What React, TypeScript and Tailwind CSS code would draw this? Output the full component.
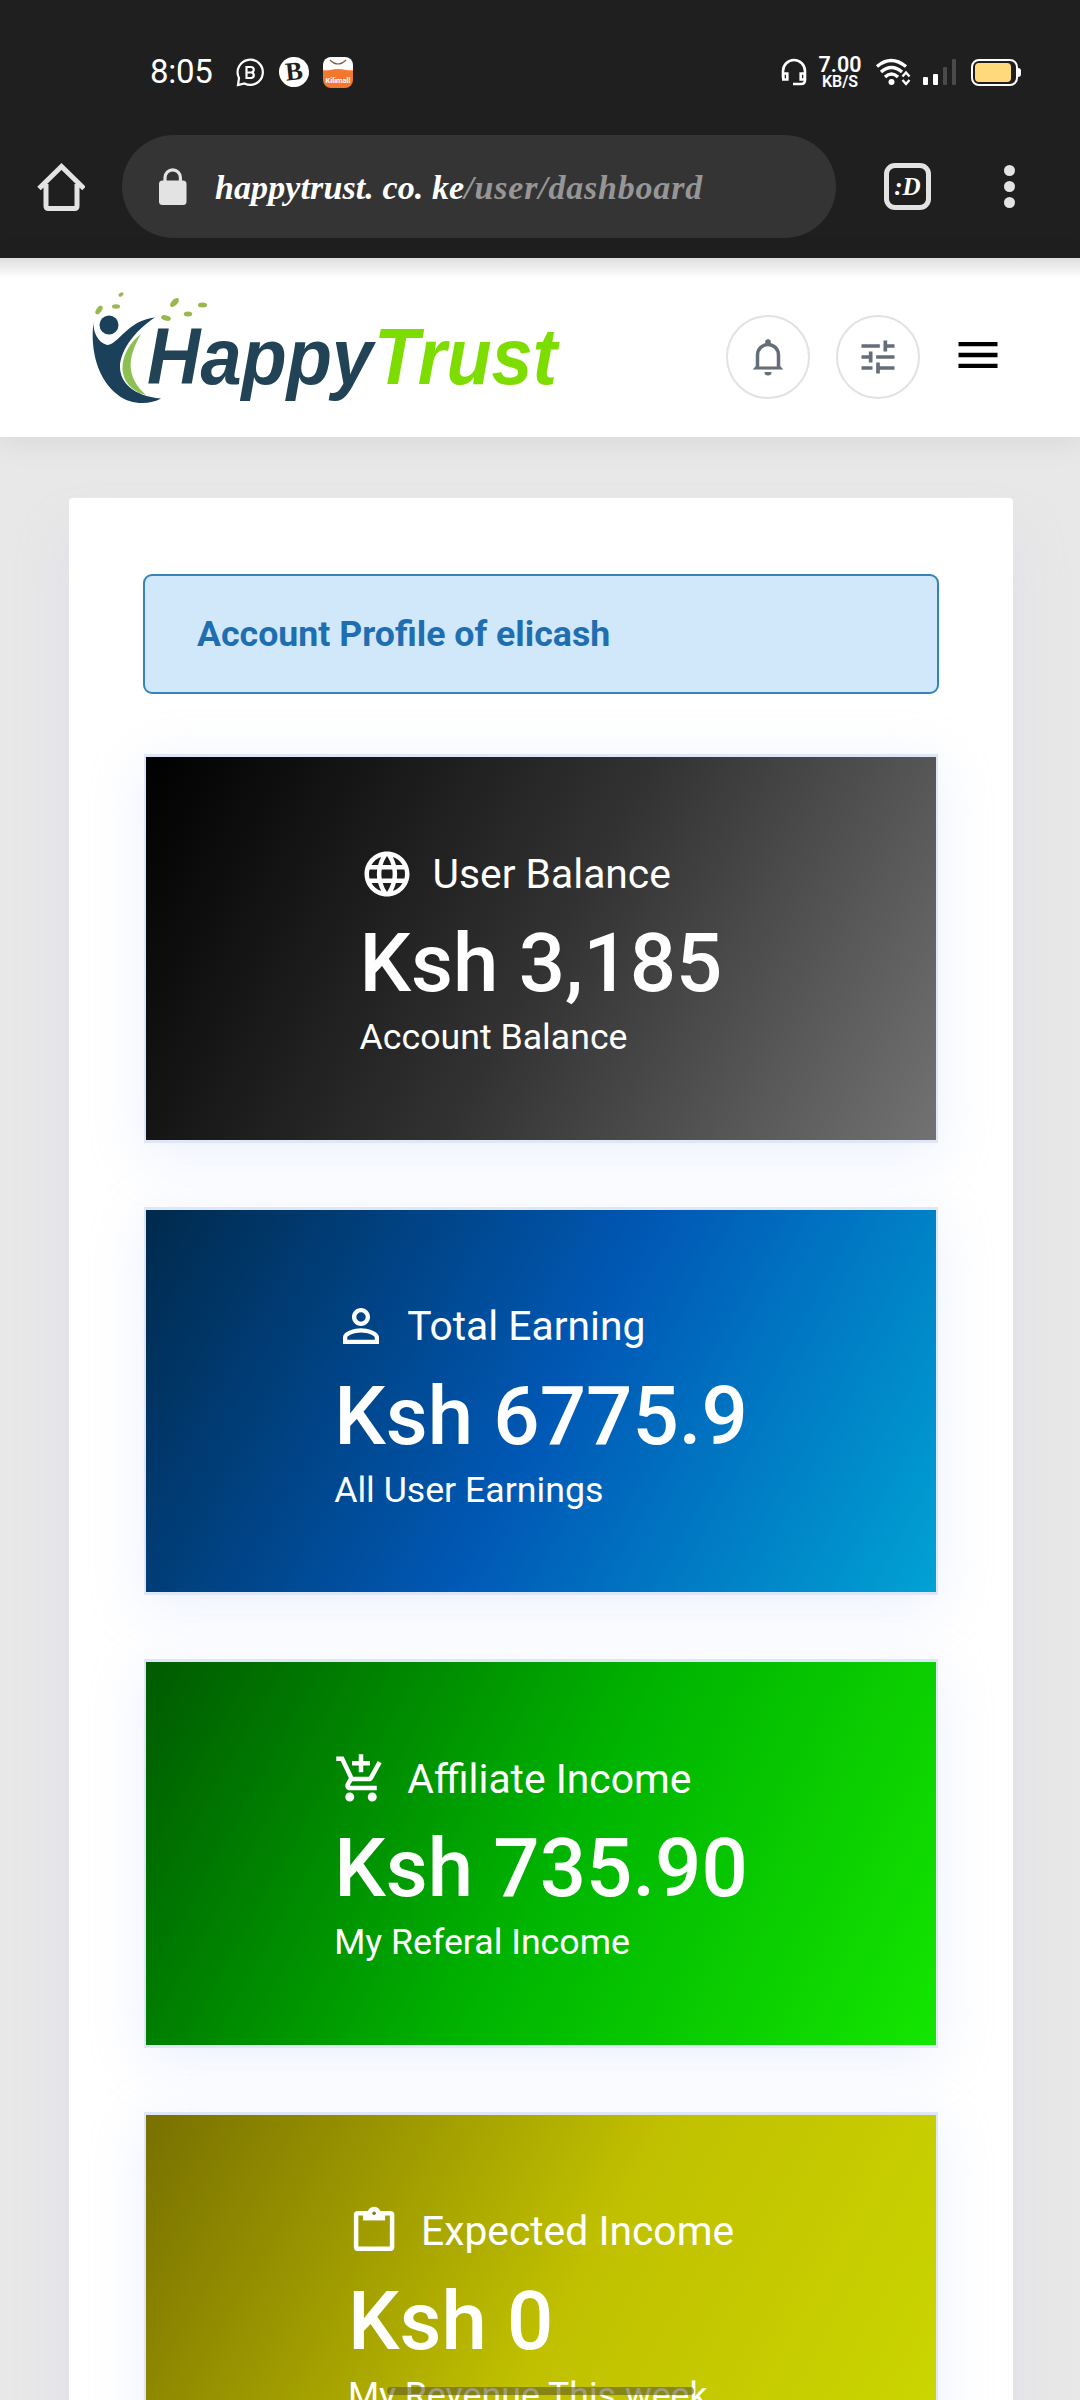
import React from 'react';
import { MdLanguage, MdPersonOutline, MdOutlineAddShoppingCart, MdTune, MdMenu } from 'react-icons/md';

const cards = [
  {
    icon: <MdLanguage size={54} />,
    title: 'User Balance',
    amount: 'Ksh 3,185',
    note: 'Account Balance',
    bg: 'bg-[linear-gradient(119deg,#000000,#323232_51%,#727272)]',
  },
  {
    icon: <MdPersonOutline size={54} />,
    title: 'Total Earning',
    amount: 'Ksh 6775.9',
    note: 'All User Earnings',
    bg: 'bg-[linear-gradient(119deg,#002a4c,#0059b6_52%,#00a2d4)]',
  },
  {
    icon: <MdOutlineAddShoppingCart size={54} />,
    title: 'Affiliate Income',
    amount: 'Ksh 735.90',
    note: 'My Referal Income',
    bg: 'bg-[linear-gradient(119deg,#005a00,#00b400_52%,#14e600)]',
  },
  {
    icon: (
      <svg width="54" height="54" viewBox="0 0 24 24" fill="none">
        <rect x="3.600" y="4.100" width="16" height="15.800" rx="0.800" stroke="currentColor" strokeWidth="2" />
        <path d="M6.700 4h9.800v3.300H6.700z" fill="currentColor" />
        <circle cx="11.600" cy="4.100" r="1.900" stroke="currentColor" strokeWidth="2" />
        <circle cx="11.600" cy="4.100" r="0.800" fill="#7d7a20" />
      </svg>
    ),
    title: 'Expected Income',
    amount: 'Ksh 0',
    note: 'My Revenue This week',
    bg: 'bg-[linear-gradient(119deg,#787000,#c0c000_52%,#ccd800)]',
  },
];

const StatusBar = () => (
  <div className="flex h-[135px] items-start justify-between pt-[56px] pl-[150px] pr-[58px]">
    <div className="flex h-8 items-center">
      <span className="w-[86px] text-[33px] leading-8 tracking-[-0.3px]">8:05</span>
      <svg width="29" height="29" viewBox="0 0 29 29" fill="none" stroke="white" strokeWidth="2.2">
        <path d="M3 20a12.6 12.6 0 1 1 5.500 5.500L2 27z" />
        <path d="M10.500 9h4.500a2.700 2.700 0 0 1 0 5.500h-4.500zM10.500 14.500h5a2.800 2.800 0 0 1 0 5.500h-5z" />
      </svg>
      <span className="ml-[14px] flex size-[30px] items-center justify-center rounded-full bg-white font-['Liberation_Serif'] text-[26px] leading-none font-black text-[#1f1f1f] -rotate-6">
        B
      </span>
      <span className="relative ml-[14px] flex h-[31px] w-[30px] items-end justify-center overflow-hidden rounded-lg bg-linear-to-b from-white from-40% to-[#f4772e] to-45%">
        <svg className="absolute inset-0" width="30" height="31" viewBox="0 0 30 31" fill="none">
          <path d="M0 16q15-8 30 0v3H0z" fill="#f4772e" />
          <path d="M7 3q8 8 16 0" stroke="#8a5a3a" strokeWidth="1.200" />
        </svg>
        <span className="relative mb-[3px] text-[7.5px] leading-[9px] font-bold">Kilimall</span>
      </span>
    </div>
    <div className="flex h-8 items-center">
      <svg width="26" height="28" viewBox="0 0 26 28" fill="none" stroke="white" strokeWidth="2.6">
        <path d="M2 20v-7a11 11 0 0 1 22 0v9q0 4-4 4h-8" />
        <path d="M2.300 15.500h4v6h-4zM19.700 15.500h4v6h-4z" />
      </svg>
      <div className="ml-[12px] flex w-[42px] flex-col items-center font-semibold">
        <span className="text-[21.5px] leading-[18px]">7.00</span>
        <span className="text-[16px] leading-[15px]">KB/S</span>
      </div>
      <svg className="ml-[14px]" width="36" height="28" viewBox="0 0 36 28" fill="none" stroke="white">
        <path d="M2 8.500q14-12 29 0M6 14q10.500-9 21 0M10 19q6.500-6 13 0" strokeWidth="3.400" />
        <circle cx="16.500" cy="24" r="3" fill="white" stroke="none" />
        <path d="M27.500 18.500l3.500-4 3.500 4M27.500 22l3.500 4 3.500-4" strokeWidth="2.400" />
      </svg>
      <div className="ml-[12px] flex h-[26px] items-end gap-[5px]">
        <i className="h-2 w-[5px] rounded-[1px] bg-white" />
        <i className="h-[11px] w-[5px] rounded-[1px] bg-white" />
        <i className="h-[18px] w-[4px] rounded-[1px] bg-[#4a4a4a]" />
        <i className="h-[26px] w-[4px] rounded-[1px] bg-[#4a4a4a]" />
      </div>
      <div className="ml-[15px] flex h-[27px] w-[47px] rounded-[8px] border-2 border-white p-[2px]">
        <i className="w-[36px] rounded-[4px] bg-[#ffd97a]" />
      </div>
      <i className="mr-px h-[9px] w-[3px] rounded-r bg-white" />
    </div>
  </div>
);

const AddressBar = () => (
  <div className="flex h-[123px] items-start">
    <div className="flex h-[103px] w-[122px] items-center pl-[37px]">
      <svg width="48" height="50" viewBox="0 0 48 50" fill="none" stroke="#e3e3e3" strokeWidth="5">
        <path d="M2 26.500L24.500 4.500 47 26.500M9 22v22q0 2.500 2.500 2.500h26q2.500 0 2.500-2.500V22" />
      </svg>
    </div>
    <div className="flex h-[103px] w-[714px] items-center rounded-full bg-[#343434] pl-[37px]">
      <svg width="28" height="37" viewBox="0 0 28 37" fill="none">
        <rect y="12.500" width="27.500" height="24.500" rx="3.500" fill="#e3e3e3" />
        <path d="M6 13V9.500a7.700 7.700 0 0 1 15.400 0V13" stroke="#e3e3e3" strokeWidth="3.200" />
      </svg>
      <span className="ml-[28px] pt-[2px] font-['Liberation_Serif'] text-[34px] font-bold whitespace-pre text-white italic">
        <span className="tracking-[0.1px]">happytrust. co. ke</span>
        <span className="tracking-[0.8px] text-[#969696]">/user/dashboard</span>
      </span>
    </div>
    <div className="flex h-[103px] flex-1 items-center justify-between pr-[65px] pl-[48px]">
      <span className="flex h-[47px] w-[47px] items-center justify-center rounded-[11px] border-[5px] border-[#e3e3e3] font-['Liberation_Serif'] text-[25px] font-bold text-white italic">
        :D
      </span>
      <span className="flex flex-col gap-[5px]">
        <i className="size-[11px] rounded-full bg-[#e3e3e3]" />
        <i className="size-[11px] rounded-full bg-[#e3e3e3]" />
        <i className="size-[11px] rounded-full bg-[#e3e3e3]" />
      </span>
    </div>
  </div>
);

const Logo = () => (
  <svg width="490" height="130" viewBox="0 0 490 130">
    <g fill="#1b4059">
      <circle cx="29" cy="46" r="9.500" />
      <path d="M13.500 43C13 52 17 63 27 66C38 66 48 41 75 38.500C58 49 40 70 40 88C40 103 53 117 81 119.500C70 126 50 126 38 116C18 101 10 72 13.500 43z" />
    </g>
    <path d="M61 55C46 66 41 83 43 94C45 106 56 114 66 116C46 98 47 79 61 55z" fill="#8cc152" />
    <g fill="#9bb84f">
      <ellipse cx="19" cy="31" rx="5" ry="2.600" transform="rotate(-55 19 31)" />
      <ellipse cx="36" cy="27.500" rx="4" ry="2.200" />
      <ellipse cx="41" cy="15.500" rx="2.800" ry="1.800" transform="rotate(-35 41 15.500)" />
      <ellipse cx="86" cy="39" rx="5" ry="2.600" transform="rotate(15 86 39)" />
      <ellipse cx="94.500" cy="23.500" rx="5.500" ry="3" transform="rotate(-45 94.500 23.500)" />
      <ellipse cx="108" cy="35" rx="4.300" ry="2.500" />
      <ellipse cx="122.500" cy="26" rx="4.600" ry="2.500" />
    </g>
    <g fontFamily="Liberation Sans, Arial, sans-serif" fontSize="80" fontWeight="bold" fontStyle="italic">
      <text x="67" y="105" textLength="226" lengthAdjust="spacingAndGlyphs" fill="#214355">Happy</text>
      <text x="294" y="105" textLength="183" lengthAdjust="spacingAndGlyphs" fill="#7edd00">Trust</text>
    </g>
  </svg>
);

const Header = () => (
  <header className="relative flex h-[179px] bg-white shadow-[0_4px_30px_rgba(0,0,0,0.08)]">
    <div className="absolute inset-x-0 top-0 h-5 bg-linear-to-b from-[#dedede] to-white" />
    <div className="relative pt-[21px] pl-[80px]">
      <Logo />
    </div>
    <div className="mt-[56px] ml-auto flex h-[85px] items-center pr-[76px] text-[#656d78]">
      <span className="flex size-[84px] items-center justify-center rounded-full border-2 border-[#e2e2e2]">
        <svg width="40" height="40" viewBox="0 0 40 40" fill="none">
          <path d="M9.500 31V18a10.500 10.500 0 0 1 21 0v13" stroke="currentColor" strokeWidth="3.500" />
          <path d="M4.500 32.500L10 27v2.500h20V27l5.500 5.500z" fill="currentColor" />
          <circle cx="20" cy="5" r="2.800" fill="currentColor" />
          <path d="M16.500 35h7a3.500 3.500 0 0 1-7 0z" fill="currentColor" />
        </svg>
      </span>
      <span className="ml-[26px] flex size-[84px] items-center justify-center rounded-full border-2 border-[#e2e2e2]">
        <MdTune size={44} />
      </span>
      <MdMenu className="mb-[3px] ml-[32px] text-black" size={52} />
    </div>
  </header>
);

const App = () => {
  return (
    <div className="relative h-[2400px] overflow-hidden bg-[#e8e8e8] font-[Roboto,sans-serif]">
      <div className="bg-[#1f1f1f] text-white">
        <StatusBar />
        <AddressBar />
      </div>
      <Header />
      <main className="mt-[61px] mr-[67px] ml-[69px] h-[2000px] rounded-[4px] bg-white px-[74px] pt-[76px] shadow-[0_40px_50px_rgba(205,203,240,0.35)]">
        <div className="mb-[60px] flex h-[120px] items-center rounded-[9px] border-2 border-[#3584b8] bg-[#d1e8fa] pt-[2px] pl-[52px] text-[35.7px] font-bold text-[#1f6eb0]">
          Account Profile of elicash
        </div>
        <div className="flex flex-col gap-[64px]">
          {cards.map((card) => (
            <div
              key={card.title}
              className="mx-px flex h-[388.5px] shrink-0 justify-center border-x-2 border-y-[3px] border-[#dfe6f5] shadow-[0_12px_50px_rgba(190,206,250,0.3)]"
            >
              <div className={`flex flex-1 justify-center pt-[86px] text-white ${card.bg}`}>
                <div>
                  <div className="flex h-[60px] items-center gap-[19px] pt-px text-[40.8px] leading-[60px]">
                    {card.icon}
                    {card.title}
                  </div>
                  <div className="mt-[14px] text-[81.6px] leading-[92px] font-medium">{card.amount}</div>
                  <div className="text-[35.7px] leading-[57px]">{card.note}</div>
                </div>
              </div>
            </div>
          ))}
        </div>
      </main>
      <div className="absolute bottom-[5px] left-[387px] h-[8px] w-[307px] rounded-full bg-[#5f5c20]/60" />
    </div>
  );
};

export default App;
